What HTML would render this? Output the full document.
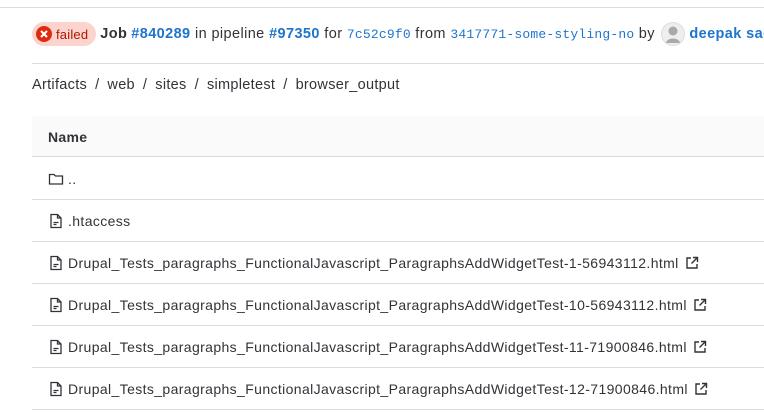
<!DOCTYPE html>
<html><head><meta charset="utf-8"><style>
*{margin:0;padding:0;box-sizing:border-box}
body{width:764px;height:412px;overflow:hidden;background:#fff;font-family:"Liberation Sans",sans-serif;color:#333238;font-size:14px;position:relative}
.a{color:#1f75cb;text-decoration:none}
.mono{font-family:"Liberation Mono",monospace;font-size:13px;color:#1f75cb;letter-spacing:0.2px}
.hdr{position:absolute;left:32px;top:22px;height:24px;display:flex;align-items:center;white-space:nowrap;letter-spacing:0.4px;font-size:14.5px}
.badge{display:flex;align-items:center;background:#fdd4cd;color:#ae1800;border-radius:12px;height:24px;padding:0 8px 0 4px;margin-right:4px;font-size:13px;letter-spacing:0.2px}
.badge .ic{width:16px;height:16px;border-radius:50%;background:#dd2b0e;margin-right:4px;display:flex;align-items:center;justify-content:center}
.line{position:absolute;height:1px;background:#dcdcde}
.bc{position:absolute;left:32px;top:77px;font-size:14.5px;letter-spacing:0.3px;white-space:nowrap}
.bc span{margin:0 8px}
.th{position:absolute;left:32px;right:0;top:116px;height:41px;background:#fafafa;border-bottom:1px solid #dcdcde;font-weight:bold;padding:13px 16px;letter-spacing:0.3px}
.row{position:absolute;left:32px;right:0;height:42px;border-bottom:1px solid #dcdcde;display:flex;align-items:center;padding-left:16px;white-space:nowrap;letter-spacing:0.38px}
.row svg{margin-right:4px;flex:none}
.ext{margin-left:6px}
</style></head><body>
<div class="line" style="left:0;right:0;top:7px"></div>
<div class="hdr">
<div class="badge"><div class="ic"><svg width="8" height="8" viewBox="0 0 8 8"><path d="M1 1L7 7M7 1L1 7" stroke="#fff" stroke-width="2"/></svg></div>failed</div>
<b style="margin-right:4px">Job</b><b class="a">#840289</b>&nbsp;in pipeline&nbsp;<b class="a">#97350</b>&nbsp;for&nbsp;<span class="mono">7c52c9f0</span>&nbsp;from&nbsp;<span class="mono">3417771-some-styling-no</span>&nbsp;by&nbsp;
<svg width="24" height="24" viewBox="0 0 24 24" style="margin:0 4px 0 2px"><circle cx="12" cy="12" r="11.5" fill="#eee" stroke="#ddd"/><circle cx="12" cy="9" r="4.5" fill="#a9a9a9"/><path d="M5 21c1-6 13-6 14 0" fill="#a9a9a9"/></svg><b class="a">deepak sagar</b>
</div>
<div class="line" style="left:32px;right:0;top:63px"></div>
<div class="bc">Artifacts<span>/</span>web<span>/</span>sites<span>/</span>simpletest<span>/</span>browser_output</div>
<div class="th">Name</div>
<div class="row" style="top:158px"><svg width="16" height="16" viewBox="0 0 16 16"><path d="M1.5 3.5h4.5l1.5 1.5h7v8h-13z" fill="none" stroke="#333238" stroke-width="1.3"/></svg>..</div>
<div class="row" style="top:200px"><svg width="16" height="16" viewBox="0 0 16 16"><path d="M3 1.5h6.5l3.5 3.5v9.5h-10z M9.5 1.5v3.5h3.5 M5.5 9.5h5M5.5 11.5h3" fill="none" stroke="#333238" stroke-width="1.3"/></svg>.htaccess</div>
<div class="row" style="top:242px"><svg width="16" height="16" viewBox="0 0 16 16"><path d="M3 1.5h6.5l3.5 3.5v9.5h-10z M9.5 1.5v3.5h3.5 M5.5 9.5h5M5.5 11.5h3" fill="none" stroke="#333238" stroke-width="1.3"/></svg>Drupal_Tests_paragraphs_FunctionalJavascript_ParagraphsAddWidgetTest-1-56943112.html<svg class="ext" width="14" height="14" viewBox="0 0 14 14"><path d="M6 2H2v10h10V8M8 1.5h4.5V6M12.5 1.5L6.5 7.5" fill="none" stroke="#333238" stroke-width="1.4"/></svg></div>
<div class="row" style="top:284px"><svg width="16" height="16" viewBox="0 0 16 16"><path d="M3 1.5h6.5l3.5 3.5v9.5h-10z M9.5 1.5v3.5h3.5 M5.5 9.5h5M5.5 11.5h3" fill="none" stroke="#333238" stroke-width="1.3"/></svg>Drupal_Tests_paragraphs_FunctionalJavascript_ParagraphsAddWidgetTest-10-56943112.html<svg class="ext" width="14" height="14" viewBox="0 0 14 14"><path d="M6 2H2v10h10V8M8 1.5h4.5V6M12.5 1.5L6.5 7.5" fill="none" stroke="#333238" stroke-width="1.4"/></svg></div>
<div class="row" style="top:326px"><svg width="16" height="16" viewBox="0 0 16 16"><path d="M3 1.5h6.5l3.5 3.5v9.5h-10z M9.5 1.5v3.5h3.5 M5.5 9.5h5M5.5 11.5h3" fill="none" stroke="#333238" stroke-width="1.3"/></svg>Drupal_Tests_paragraphs_FunctionalJavascript_ParagraphsAddWidgetTest-11-71900846.html<svg class="ext" width="14" height="14" viewBox="0 0 14 14"><path d="M6 2H2v10h10V8M8 1.5h4.5V6M12.5 1.5L6.5 7.5" fill="none" stroke="#333238" stroke-width="1.4"/></svg></div>
<div class="row" style="top:368px"><svg width="16" height="16" viewBox="0 0 16 16"><path d="M3 1.5h6.5l3.5 3.5v9.5h-10z M9.5 1.5v3.5h3.5 M5.5 9.5h5M5.5 11.5h3" fill="none" stroke="#333238" stroke-width="1.3"/></svg>Drupal_Tests_paragraphs_FunctionalJavascript_ParagraphsAddWidgetTest-12-71900846.html<svg class="ext" width="14" height="14" viewBox="0 0 14 14"><path d="M6 2H2v10h10V8M8 1.5h4.5V6M12.5 1.5L6.5 7.5" fill="none" stroke="#333238" stroke-width="1.4"/></svg></div>
</body></html>
